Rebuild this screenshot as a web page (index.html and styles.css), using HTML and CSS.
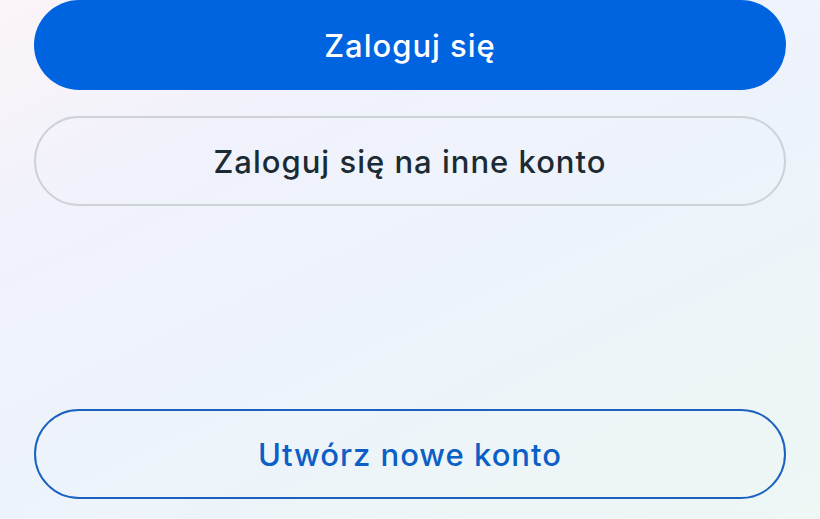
FILE: index.html
```html
<!DOCTYPE html>
<html lang="pl">
<head>
<meta charset="utf-8">
<link rel="stylesheet" href="styles.css">
</head>
<body>
<main class="screen">
  <button class="btn btn-primary">Zaloguj się</button>
  <button class="btn btn-secondary">Zaloguj się na inne konto</button>
  <div class="spacer"></div>
  <button class="btn btn-outline">Utwórz nowe konto</button>
</main>
</body>
</html>
```
FILE: styles.css
```css
html, body {
  margin: 0;
  padding: 0;
  height: 100%;
}
body {
  background: linear-gradient(155deg, #fbf4f8 0%, #f1f2fb 25%, #edf3fb 55%, #edf7f4 100%);
  font-family: Inter, "Noto Sans", sans-serif;
}
.screen {
  box-sizing: border-box;
  height: 519px;
  padding: 0 34px 20px 34px;
  display: flex;
  flex-direction: column;
  gap: 26px;
}
.spacer {
  flex: 1;
  margin-top: -26px;
}
.btn {
  box-sizing: border-box;
  height: 90px;
  width: 100%;
  border-radius: 45px;
  font-family: inherit;
  font-size: 31px;
  font-weight: 500;
  letter-spacing: 1px;
  display: flex;
  align-items: center;
  justify-content: center;
  padding: 0;
  flex-shrink: 0;
}
.btn-primary {
  background: #0064e0;
  color: #ffffff;
  border: none;
}
.btn-secondary {
  background: transparent;
  color: #1c2b33;
  border: 2px solid #cdd2d8;
}
.btn-outline {
  background: transparent;
  color: #0b5fc5;
  border: 2px solid #1b62c0;
}
```
